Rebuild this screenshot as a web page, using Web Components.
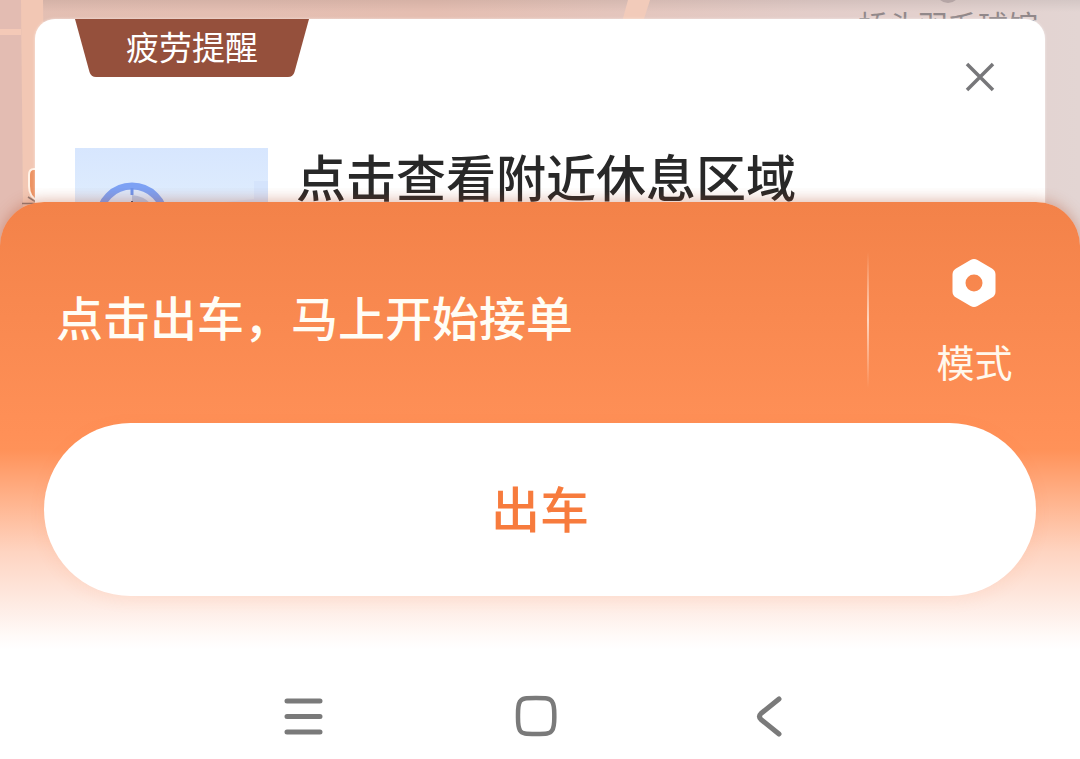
<!DOCTYPE html>
<html lang="zh-CN">
<head>
<meta charset="utf-8">
<meta name="viewport" content="width=device-width, initial-scale=1">
<title>出车</title>
<style>
  body { margin: 0; background: #fff; font-family: "Noto Sans CJK SC", sans-serif; }
</style>
</head>
<body>
<driver-home>
  <map-backdrop slot="map">桥头羽毛球馆</map-backdrop>
  <fatigue-card slot="notice">
    <span slot="tag">疲劳提醒</span>
    点击查看附近休息区域
  </fatigue-card>
  <start-sheet slot="sheet">
    <span slot="hint">点击出车，马上开始接单</span>
    <mode-button slot="mode">模式</mode-button>
    出车
  </start-sheet>
  <system-nav slot="nav"></system-nav>
</driver-home>

<script>
const define = (name, html) => customElements.define(name, class extends HTMLElement {
  constructor() {
    super();
    this.attachShadow({ mode: "open" }).innerHTML = html;
  }
});

define("driver-home", `
<style>
  :host { display: flex; flex-direction: column; position: relative; min-height: 100vh; overflow: hidden; isolation: isolate; }
  main { display: flex; flex-direction: column; }
  footer { flex: 1; background: #fff; }
</style>
<slot name="map"></slot>
<main><slot name="notice"></slot><slot name="sheet"></slot></main>
<footer><slot name="nav"></slot></footer>`);

define("map-backdrop", `
<style>
  :host { display: block; position: absolute; inset: 0 0 auto; height: 300px; z-index: -1; overflow: hidden;
    background: linear-gradient(#0001, #0000 12px), linear-gradient(90deg, #e3bfb3, #e5beb1 40%, #e3cdc9 75%, #e3d5d3); }
  svg { position: absolute; left: 0; top: 0; }
  .poi { position: absolute; right: 42px; top: 4px; font-size: 30px; line-height: 40px; color: #91888a; }
  .pin { position: absolute; right: 120px; top: -21px; width: 24px; height: 24px; border-radius: 50%; background: #b5a5a5; }
</style>
<svg width="700" height="300" viewBox="0 0 700 300" aria-hidden="true">
  <path d="M0 0H21L23 300H0z" fill="#e3bcb2"/>
  <path d="M21 0H43L46 300H24z" fill="#f2c7b4"/>
  <path d="M0 29H21V35H0z" fill="#f4c9b7"/>
  <path d="M628 0H650L643 22H622z" fill="#f2cbba"/>
  <path d="M40 169H34Q29 169 29 175V186Q29 197 38 201" fill="#ed9363" stroke="#fff3e8" stroke-width="2"/>
  <path d="M22 203.500H40M28 197L36 202" stroke="#927a72" stroke-width="1.500" fill="none"/>
</svg>
<span class="pin"></span>
<span class="poi"><slot></slot></span>`);

define("fatigue-card", `
<style>
  :host { display: block; margin: 19px 35px 0; }
  article { display: grid; grid-template-rows: 129px 94px; border-radius: 20px; background: #fff;
    box-shadow: 0 0 3px #fff9; margin-bottom: -40px; padding: 0 40px; }
  header { display: flex; justify-content: space-between; align-items: start; }
  .tag { position: relative; isolation: isolate; width: 234px; height: 58px; text-align: center; color: #fff;
    font-size: 33px; line-height: 54px; }
  .tag svg { position: absolute; inset: 0; z-index: -1; }
  button { border: 0; padding: 0; background: none; width: 48px; height: 48px; margin: 34px 1px 0 0; }
  button svg { display: block; }
  .body { display: flex; gap: 28px; }
  .art { flex: none; display: block; }
  h2 { margin: 0; font-size: 50px; line-height: 54px; font-weight: 500; color: #282828; white-space: nowrap; }
</style>
<article>
  <header>
    <span class="tag">
      <svg width="234" height="58" aria-hidden="true"><path d="M0 0H234L219.500 53Q218 58 213 58H21Q16 58 14.500 53z" fill="#95503c"/></svg>
      <slot name="tag"></slot>
    </span>
    <button aria-label="关闭"><svg width="48" height="48" fill="none" stroke="#77777a" stroke-width="3.500"><path d="M11 11L37 37M37 11L11 37"/></svg></button>
  </header>
  <div class="body">
    <svg class="art" width="193" height="94" aria-hidden="true">
      <defs><linearGradient id="g" x2="0" y2="1"><stop stop-color="#d7e6fe"/><stop offset="1" stop-color="#e4f1fd"/></linearGradient></defs>
      <rect width="193" height="94" fill="url(#g)"/>
      <path d="M179 33H193V54H150L179 51z" fill="#d5e4fc"/>
      <circle cx="57" cy="71" r="33" fill="#dbe8fc" stroke="#7da1f4" stroke-width="7"/>
      <path d="M57 47Q69 48 76 56L57 70z" fill="#b6c6e5"/>
      <path d="M57 40V47" stroke="#6e94ed" stroke-width="3"/>
      <path d="M57 53V60" stroke="#44506c" stroke-width="2"/>
    </svg>
    <h2><slot></slot></h2>
  </div>
</article>`);

define("start-sheet", `
<style>
  :host { display: block; position: relative; border-radius: 44px 44px 0 0; padding: 48px 44px 60px;
    background: linear-gradient(#f38249, #ff9057 232px, #ff9259 248px, #ffb48e 300px, #fed4c1 350px, #fee8df 396px, #fffaf8 434px, #fff 448px);
    box-shadow: 0 -2px 14px #b0482460; clip-path: inset(-14px 0 0 0); }
  .row { display: flex; align-items: center; height: 140px; margin-bottom: 33px; }
  .hint { flex: 1; margin: 0 0 0 12px; padding-bottom: 8px; font-size: 47px; line-height: 60px; font-weight: 500; color: #fffdf5; white-space: nowrap; }
  .line { width: 2px; height: 136px; background: linear-gradient(#fff0, #ffd5bf 50%, #fff0); }
  .mode { width: 167px; display: flex; justify-content: center; padding-left: 44px; box-sizing: border-box; }
  .go { display: block; width: 100%; height: 173px; border: 0; border-radius: 87px; padding: 0 0 6px; background: #fff;
    font: 500 49px/64px "Noto Sans CJK SC", sans-serif; color: #f77b3d; box-shadow: 0 4px 16px #f0834a18; }
</style>
<div class="row">
  <p class="hint"><slot name="hint"></slot></p>
  <span class="line"></span>
  <div class="mode"><slot name="mode"></slot></div>
</div>
<button class="go"><slot></slot></button>`);

define("mode-button", `
<style>
  :host { display: block; }
  button { display: flex; flex-direction: column; align-items: center; gap: 30px; border: 0; padding: 4px 0 0; background: none;
    color: #fff8ed; font: 400 38px/48px "Noto Sans CJK SC", sans-serif; }
</style>
<button>
  <svg width="44" height="48" viewBox="0 0 44 48" aria-hidden="true"><path fill="#fff" fill-rule="evenodd" d="M18.500 1Q22 -1 25.500 1L40 9.500Q43.500 11.500 43.500 15.500V32.500Q43.500 36.500 40 38.500L25.500 47Q22 49 18.500 47L4 38.500Q.5 36.500 .5 32.500V15.500Q.5 11.500 4 9.500zM22 15.500A8.500 8.500 0 1 0 22 32.500A8.500 8.500 0 1 0 22 15.500z"/></svg>
  <slot></slot>
</button>`);

define("system-nav", `
<style>
  :host { display: block; }
  nav { display: grid; grid-template-columns: 1fr 48px 185px 48px 185px 48px 1fr; padding: 36px 8px 20px 0; }
  button { border: 0; padding: 0; background: none; width: 48px; height: 48px; }
  svg { display: block; fill: none; stroke: #7a7a7a; stroke-width: 5; stroke-linecap: round; stroke-linejoin: round; }
  .menu { grid-column: 2; } .home { grid-column: 4; } .back { grid-column: 6; }
</style>
<nav aria-label="系统导航">
  <button class="menu" aria-label="最近任务"><svg width="48" height="48"><path d="M8 9H41M8 24.500H41M8 40H41"/></svg></button>
  <button class="home" aria-label="主屏幕"><svg width="48" height="48"><path stroke-width="4.500" d="M24 6C34 6 38 6 40 9.500C42.500 13 42.300 17 42.300 24S42.500 35 40 38.500C38 42 34 42 24 42S10 42 8 38.500C5.800 35 6 31 6 24S5.800 13 8 9.500C10 6 14 6 24 6z"/></svg></button>
  <button class="back" aria-label="返回"><svg width="48" height="48"><path d="M34 7L16 21.500Q13 24.500 16 27.500L34 42"/></svg></button>
</nav>`);
</script>
</body>
</html>
